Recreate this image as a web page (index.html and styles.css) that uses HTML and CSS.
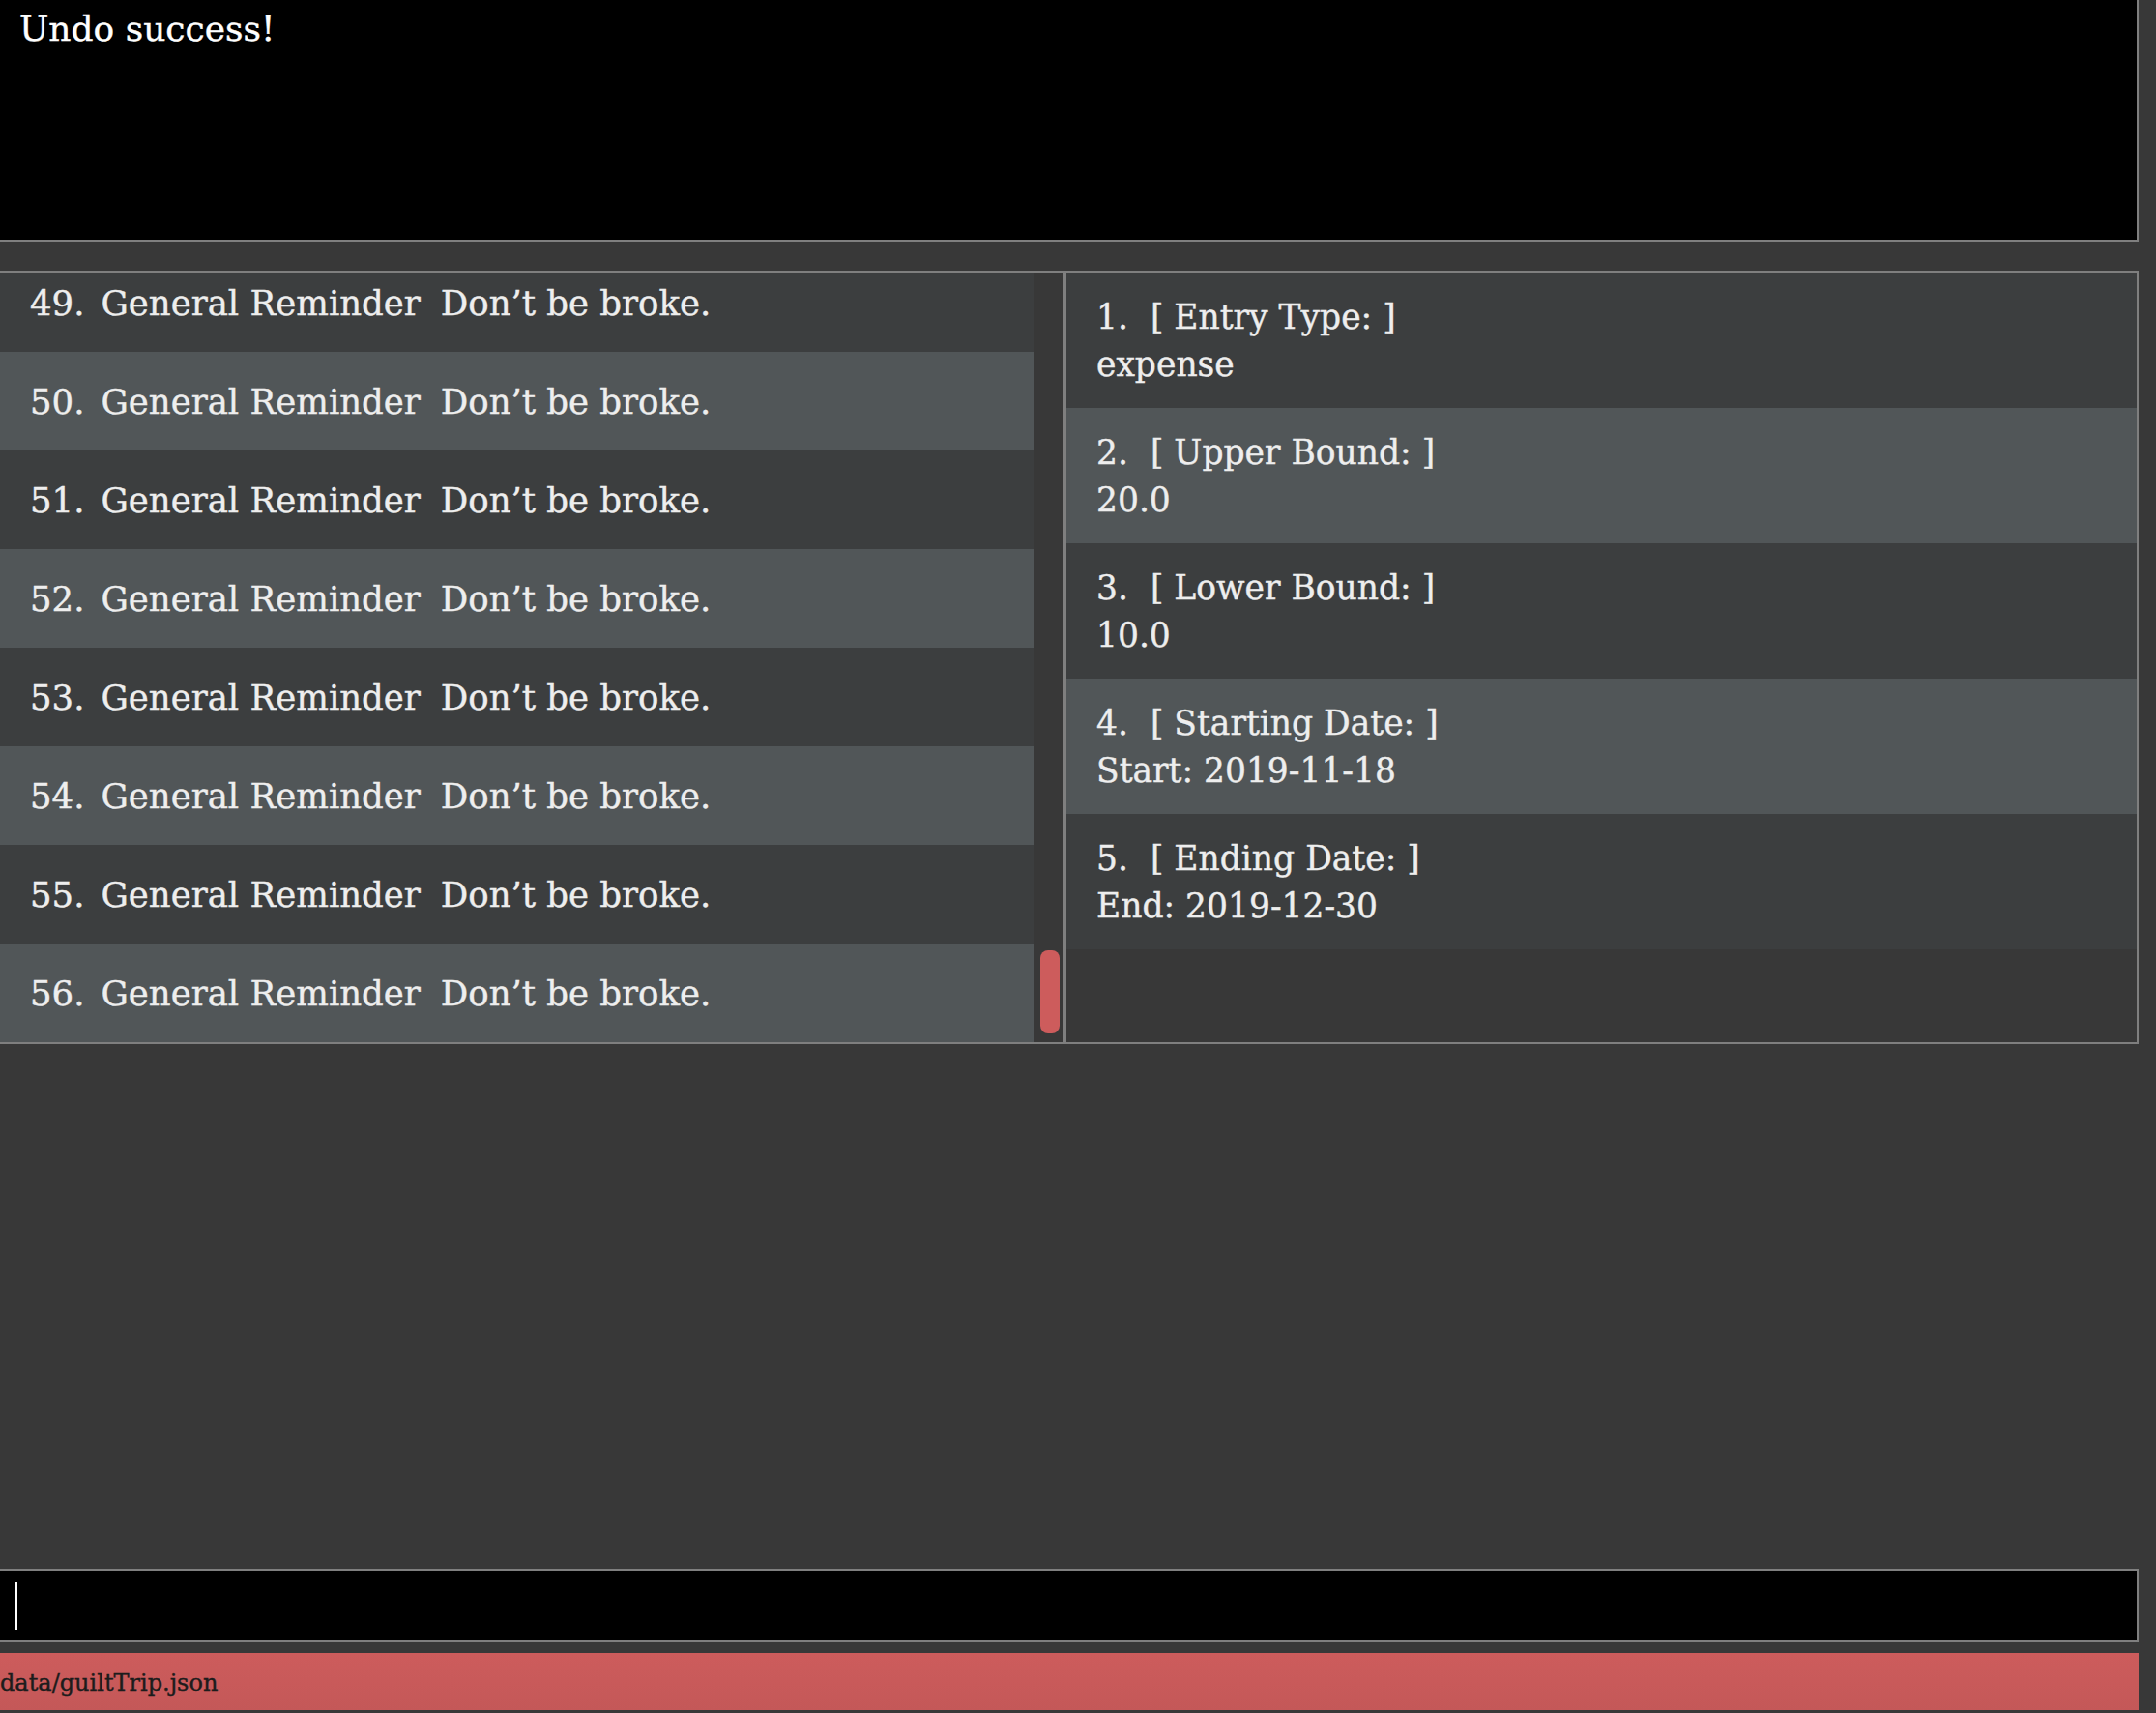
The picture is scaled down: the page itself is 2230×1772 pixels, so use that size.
FILE: index.html
```html
<!DOCTYPE html>
<html>
<head>
<meta charset="utf-8">
<link rel="stylesheet" href="styles.css">
</head>
<body>
<div class="app">
  <div class="result">Undo success!</div>
  <div class="main">
    <div class="list-pane">
      <div class="list-view">
        <div class="list-inner">
          <div class="list-row even"><span class="idx">49.</span><span class="cat">General Reminder</span><span class="msg">Don’t be broke.</span></div>
          <div class="list-row odd"><span class="idx">50.</span><span class="cat">General Reminder</span><span class="msg">Don’t be broke.</span></div>
          <div class="list-row even"><span class="idx">51.</span><span class="cat">General Reminder</span><span class="msg">Don’t be broke.</span></div>
          <div class="list-row odd"><span class="idx">52.</span><span class="cat">General Reminder</span><span class="msg">Don’t be broke.</span></div>
          <div class="list-row even"><span class="idx">53.</span><span class="cat">General Reminder</span><span class="msg">Don’t be broke.</span></div>
          <div class="list-row odd"><span class="idx">54.</span><span class="cat">General Reminder</span><span class="msg">Don’t be broke.</span></div>
          <div class="list-row even"><span class="idx">55.</span><span class="cat">General Reminder</span><span class="msg">Don’t be broke.</span></div>
          <div class="list-row odd"><span class="idx">56.</span><span class="cat">General Reminder</span><span class="msg">Don’t be broke.</span></div>
        </div>
      </div>
      <div class="scrollbar"><div class="thumb"></div></div>
    </div>
    <div class="detail-pane">
      <div class="detail-row even"><div class="d-head"><span class="d-idx">1.</span><span>[ Entry Type: ]</span></div><div class="d-val">expense</div></div>
      <div class="detail-row odd"><div class="d-head"><span class="d-idx">2.</span><span>[ Upper Bound: ]</span></div><div class="d-val">20.0</div></div>
      <div class="detail-row even"><div class="d-head"><span class="d-idx">3.</span><span>[ Lower Bound: ]</span></div><div class="d-val">10.0</div></div>
      <div class="detail-row odd"><div class="d-head"><span class="d-idx">4.</span><span>[ Starting Date: ]</span></div><div class="d-val">Start: 2019-11-18</div></div>
      <div class="detail-row even"><div class="d-head"><span class="d-idx">5.</span><span>[ Ending Date: ]</span></div><div class="d-val">End: 2019-12-30</div></div>
    </div>
  </div>
  <div class="spacer"></div>
  <div class="command"><span class="caret"></span></div>
  <div class="status">data/guiltTrip.json</div>
</div>
</body>
</html>
```
FILE: styles.css
```css
html, body {
  margin: 0;
  padding: 0;
  background: #383838;
  overflow: hidden;
}
body {
  font-family: "DejaVu Serif", "Liberation Serif", serif;
  color: #eeeeee;
  -webkit-text-stroke: 0.4px currentColor;
}
.app {
  display: flex;
  flex-direction: column;
  height: 1772px;
  width: 2214px;
  margin-left: -2px;
}
.result {
  box-sizing: border-box;
  height: 250px;
  background: #000;
  border: 2px solid #7f7f7f;
  border-top: none;
  color: #ffffff;
  font-size: 36px;
  padding: 9px 0 0 20px;
  line-height: 42px;
}
.main {
  margin-top: 30px;
  box-sizing: border-box;
  height: 800px;
  border: 2px solid #7f7f7f;
  display: flex;
  overflow: hidden;
}
.list-pane {
  width: 1100px;
  display: flex;
  flex: none;
}
.list-view {
  width: 1070px;
  overflow: hidden;
  background: #383838;
}
.list-inner {
  margin-top: -20px;
}
.list-row {
  height: 102px;
  display: flex;
  align-items: center;
  padding-left: 31px;
  font-size: 35.5px;
  white-space: nowrap;
}
.idx {
  margin-right: 17px;
}
.cat {
  margin-right: 21px;
}
.even { background: #3c3e3f; }
.odd { background: #515658; }
.scrollbar {
  width: 30px;
  background: #383838;
  position: relative;
}
.thumb {
  position: absolute;
  left: 6px;
  width: 20px;
  top: 701px;
  height: 86px;
  background: #cd5c5c;
  border-radius: 8px;
}
.detail-pane {
  flex: 1;
  border-left: 3px solid #7f7f7f;
  background: #383838;
}
.detail-row {
  box-sizing: border-box;
  height: 140px;
  padding: 22px 0 0 31px;
  font-size: 34.5px;
  line-height: 49px;
  white-space: nowrap;
}
.d-head {
  display: flex;
  gap: 23px;
}
.spacer {
  flex: 1;
}
.command {
  box-sizing: border-box;
  height: 76px;
  background: #000;
  border: 2px solid #7f7f7f;
  padding: 11px 0 0 16px;
}
.caret {
  display: block;
  width: 2px;
  height: 50px;
  background: #ffffff;
}
.status {
  margin-top: 11px;
  margin-bottom: 3px;
  height: 59px;
  box-sizing: border-box;
  margin-left: 2px;
  background: linear-gradient(to bottom, #cd5c5c, #c45858);
  color: #1c1c1c;
  font-size: 24px;
  padding-top: 17px;
  line-height: 28px;
}
```
